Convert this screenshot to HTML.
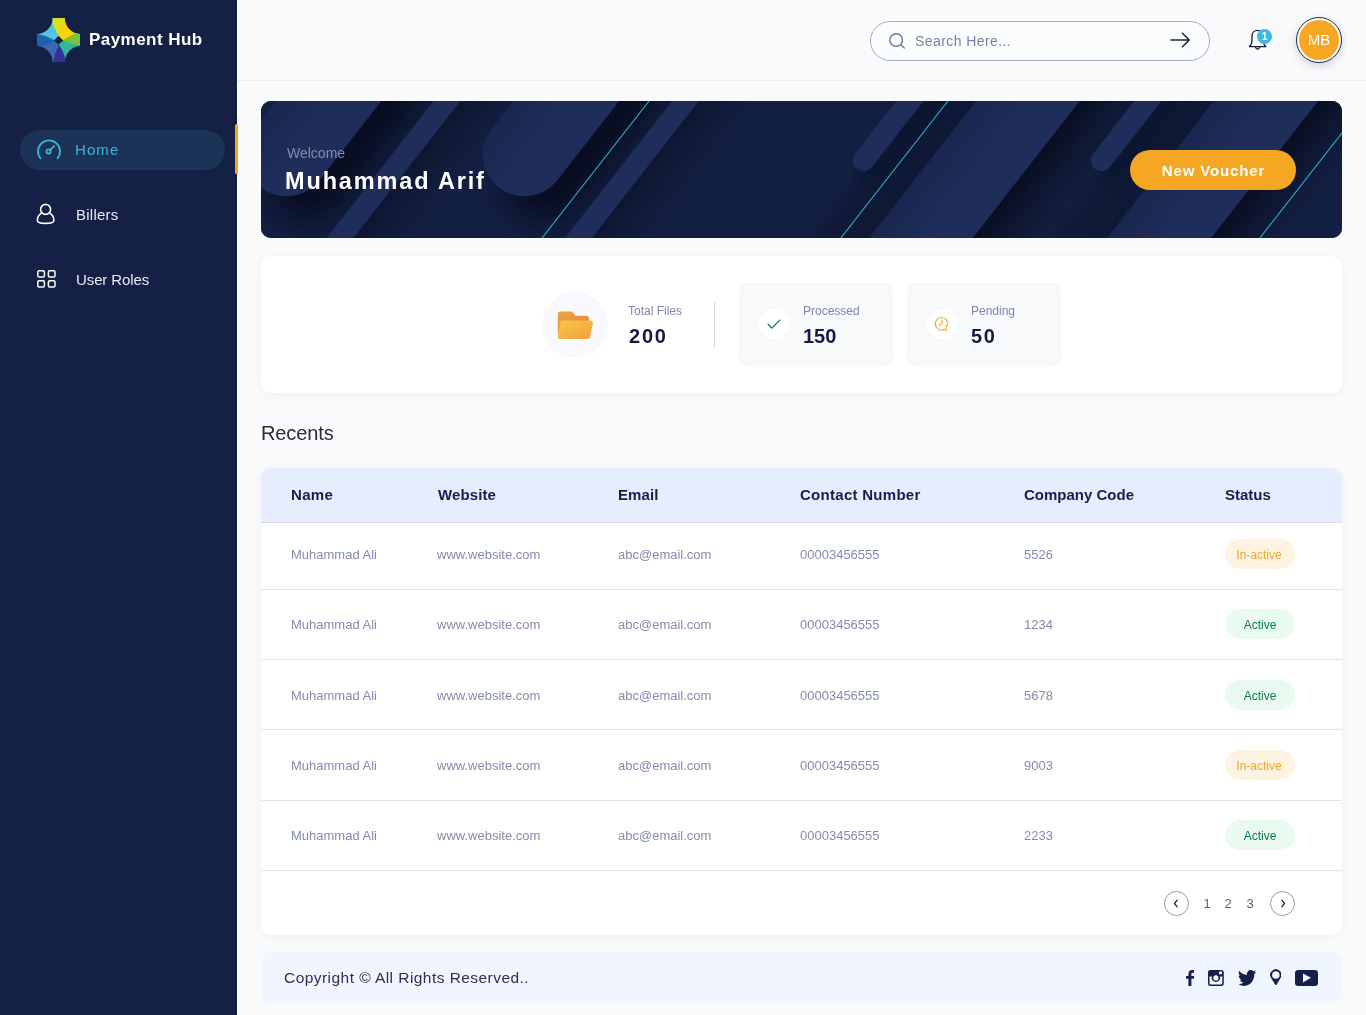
<!DOCTYPE html>
<html lang="en">
<head>
<meta charset="utf-8">
<title>Payment Hub</title>
<style>
*{box-sizing:border-box;margin:0;padding:0}
html,body{width:1366px;height:1015px;overflow:hidden}
body{font-family:"Liberation Sans",sans-serif;background:#f9fafb;position:relative;color:#14204a}
.abs{position:absolute}
.t{position:absolute;white-space:nowrap;line-height:1}
.t,.th,.td,.bdg{will-change:transform}
/* sidebar */
#side{position:absolute;left:0;top:0;width:237px;height:1015px;background:#142044}
#navact{position:absolute;left:20px;top:130px;width:205px;height:40px;border-radius:20px;background:#1a3356}
#navbar{position:absolute;left:235px;top:124px;width:3px;height:50px;border-radius:2px;background:#f5a623}
/* header */
#hdr{position:absolute;left:237px;top:0;width:1129px;height:81px;background:#f9fafb;border-bottom:1px solid #eaecf0}
#search{position:absolute;left:870px;top:21px;width:340px;height:40px;border-radius:20px;border:1px solid #a9aec8;background:#fbfcfe}
/* banner */
#banner{position:absolute;left:261px;top:101px;width:1081px;height:137px;border-radius:10px;overflow:hidden;background:#142043}
#btn{position:absolute;left:1130px;top:150px;width:166px;height:40px;border-radius:20px;background:#f5a623}
/* stats */
#stats{position:absolute;left:261px;top:256px;width:1081px;height:137px;border-radius:10px;background:#fff;box-shadow:0 2px 10px rgba(20,32,74,.045)}
.scard{position:absolute;top:282px;width:154px;height:85px;border-radius:10px;background:#f8f9fb}
.circ{position:absolute;border-radius:50%}
/* table */
#tbl{position:absolute;left:261px;top:468px;width:1081px;height:467px;border-radius:10px;background:#fff;box-shadow:0 2px 10px rgba(20,32,74,.045);overflow:hidden}
#thead{position:absolute;left:0;top:0;width:1081px;height:55px;background:#e6edff;border-bottom:1px solid #d9deea}
.sep{position:absolute;left:0;width:1081px;height:1px;background:#e3e5eb}
.th{position:absolute;white-space:nowrap;line-height:1;font-weight:700;font-size:15px;color:#14204a;top:19px}
.td{position:absolute;white-space:nowrap;line-height:1;font-size:13px;color:#858bae}
.bdg{position:absolute;left:964px;width:70px;height:30px;border-radius:15px;font-size:12px;line-height:32px;text-align:center}
.bdg.in{padding-right:2px}
.bdg.in{background:#fff3e2;color:#f5a623}
.bdg.ac{background:#e9fbf1;color:#0d7a4f}
/* footer */
#foot{position:absolute;left:261px;top:952px;width:1081px;height:51px;border-radius:10px;background:#f1f5ff}
</style>
</head>
<body>
<!-- SIDEBAR -->
<div id="side"></div>
<svg class="abs" style="left:36.9px;top:17.8px" width="43.4" height="44.1" viewBox="0 0 43.4 44.1">
<defs><clipPath id="lg"><path d="M15.7,0 H27.8 A15.5,16 0 0 0 43.4,16 V28.1 A15.5,16 0 0 0 27.8,44.1 H15.7 A15.7,16 0 0 0 0,28.1 V16 A15.7,16 0 0 0 15.7,0 Z"/></clipPath></defs>
<g clip-path="url(#lg)">
<rect width="44" height="45" fill="#3b68b5"/>
<path d="M0,16 L0,0 L15.7,0 L15.7,4.7 Q18,11.5 21.5,17.9 L17.1,22.4 Q9,18 0,16 Z" fill="#50c5e8" stroke="#50c5e8" stroke-width=".5"/>
<path d="M15.7,0 L27.8,0 Q25.5,9 21.5,17.9 Q18,11.5 15.7,4.7 Z" fill="#dde021" stroke="#dde021" stroke-width=".5"/>
<path d="M27.8,0 L44,0 L44,16 L39.5,15.5 Q32,18 26.2,22.4 L21.5,17.9 Q25.5,9 27.8,0 Z" fill="#ffd200" stroke="#ffd200" stroke-width=".5"/>
<path d="M39.5,15.5 L44,16 L44,28.1 Q35,27 26.2,22.4 Q32,18 39.5,15.5 Z" fill="#7dc243" stroke="#7dc243" stroke-width=".5"/>
<path d="M44,28.1 L44,45 L27.8,45 L27.8,39.5 Q26,33 21.5,26.5 L26.2,22.4 Q35,27 44,28.1 Z" fill="#31b994" stroke="#31b994" stroke-width=".5"/>
<path d="M27.8,39.5 L27.8,45 L15.7,45 Q17.5,35 21.5,26.5 Q26,33 27.8,39.5 Z" fill="#33309a" stroke="#33309a" stroke-width=".5"/>
<path d="M15.7,45 L0,45 L0,28.1 L4.1,28.1 Q11,26 17.1,22.4 L21.5,26.5 Q17.5,35 15.7,45 Z" fill="#3b68b5" stroke="#3b68b5" stroke-width=".5"/>
<path d="M4.1,28.1 L0,28.1 L0,16 Q9,18 17.1,22.4 Q11,26 4.1,28.1 Z" fill="#1d62b1" stroke="#1d62b1" stroke-width=".5"/>
<path d="M21.5,17.9 L26.2,22.4 L21.5,26.5 L17.1,22.4 Z" fill="#142044"/>
</g></svg>
<div class="t" id="brand" style="left:89px;top:31px;font-size:17px;font-weight:700;color:#fff;letter-spacing:.45px">Payment Hub</div>
<div id="navact"></div><div id="navbar"></div>
<svg class="abs" style="left:35px;top:136px" width="28" height="28" viewBox="0 0 28 28" fill="none" stroke="#3eb4dc" stroke-width="1.8" stroke-linecap="round">
<path d="M5.5,22.3 A11,11 0 1 1 22.5,22.3"/><circle cx="13.6" cy="15.4" r="2.1"/><path d="M15.2,13.9 L19.2,10.1"/></svg>
<div class="t" style="left:75px;top:142px;font-size:15px;color:#3eb4dc;letter-spacing:1.1px">Home</div>
<svg class="abs" style="left:34px;top:200px" width="24" height="28" viewBox="0 0 24 28" fill="none" stroke="#fff" stroke-width="1.6" stroke-linecap="round" stroke-linejoin="round">
<circle cx="11.6" cy="9.4" r="5"/><path d="M7.6,12.8 C4.5,14.8 3.3,18 3.3,20.6 C3.3,22.3 7,23.4 11.6,23.4 C16.2,23.4 19.9,22.3 19.9,20.6 C19.9,18 18.7,14.8 15.6,12.8"/></svg>
<div class="t" style="left:76px;top:207px;font-size:15px;color:#e9ebf3;letter-spacing:.25px">Billers</div>
<svg class="abs" style="left:36px;top:269px" width="22" height="20" viewBox="0 0 22 20" fill="none" stroke="#fff" stroke-width="1.5">
<rect x="1.8" y="1.8" width="6.6" height="6.2" rx="1.3"/><rect x="12.4" y="1.8" width="6.6" height="6.2" rx="1.3"/><rect x="1.8" y="11.8" width="6.6" height="6.2" rx="1.3"/><rect x="12.4" y="11.8" width="6.6" height="6.2" rx="1.3"/></svg>
<div class="t" style="left:76px;top:272px;font-size:15px;color:#e9ebf3;letter-spacing:-.1px">User Roles</div>

<!-- HEADER -->
<div id="hdr"></div>
<div id="search"></div>
<svg class="abs" style="left:886px;top:30px" width="22" height="22" viewBox="0 0 22 22" fill="none" stroke="#6f7699" stroke-width="1.4" stroke-linecap="round">
<circle cx="10.2" cy="10" r="6.3"/><path d="M14.8,14.7 L18.3,18"/></svg>
<div class="t" style="left:915px;top:34px;font-size:14px;color:#7c82a6;letter-spacing:.42px">Search Here...</div>
<svg class="abs" style="left:1168px;top:30px" width="24" height="20" viewBox="0 0 24 20" fill="none" stroke="#1d2547" stroke-width="1.6" stroke-linecap="round" stroke-linejoin="round">
<path d="M3,10 H21 M14.5,3.3 L21.2,10 L14.5,16.7"/></svg>
<!-- bell -->
<svg class="abs" style="left:1244px;top:26px" width="30" height="28" viewBox="0 0 30 28" fill="none" stroke="#151d3f" stroke-width="1.3" stroke-linecap="round" stroke-linejoin="round">
<path d="M5.4,20.6 Q8,18.4 8,14 V10.4 C8,6.7 10.5,4.3 13.6,4.3 C16.7,4.3 19.2,6.7 19.2,10.4 V14 Q19.2,18.4 21.8,20.6 Z"/>
<path d="M11.7,21.2 C11.9,23.6 15.3,23.6 15.5,21.2"/></svg>
<div class="circ" style="left:1257px;top:29px;width:15px;height:15px;background:#3fb8de"></div>
<div class="t" style="left:1257px;top:31.5px;width:15px;text-align:center;font-size:10px;font-weight:700;color:#fff">1</div>
<!-- avatar -->
<div class="circ" style="left:1296px;top:17px;width:46px;height:46px;border:1.3px solid #1a244c;background:#fff;box-shadow:0 3px 8px rgba(20,32,74,.18)"></div>
<div class="circ" style="left:1299px;top:20px;width:40px;height:40px;background:#f5a623"></div>
<div class="t" style="left:1299px;top:32.4px;width:40px;text-align:center;font-size:15px;color:#fff">MB</div>

<!-- BANNER -->
<div id="banner">
<svg width="1081" height="137" viewBox="0 0 1081 137" style="position:absolute;left:0;top:0;display:block">
<defs>
<linearGradient id="sh" gradientUnits="userSpaceOnUse" x1="0" y1="0" x2="60" y2="0">
<stop offset="0" stop-color="#060a1a" stop-opacity=".82"/><stop offset=".5" stop-color="#060a1a" stop-opacity=".38"/><stop offset="1" stop-color="#060a1a" stop-opacity="0"/>
</linearGradient>
<linearGradient id="shs" gradientUnits="userSpaceOnUse" x1="0" y1="0" x2="50" y2="0">
<stop offset="0" stop-color="#060a1a" stop-opacity=".45"/><stop offset="1" stop-color="#060a1a" stop-opacity="0"/>
</linearGradient>
<linearGradient id="shl" gradientUnits="userSpaceOnUse" x1="0" y1="0" x2="-55" y2="0">
<stop offset="0" stop-color="#060a1a" stop-opacity=".38"/><stop offset=".7" stop-color="#060a1a" stop-opacity=".25"/><stop offset="1" stop-color="#060a1a" stop-opacity="0"/>
</linearGradient>
<linearGradient id="st" gradientUnits="userSpaceOnUse" x1="0" y1="0" x2="82" y2="0">
<stop offset="0" stop-color="#19264f"/><stop offset=".6" stop-color="#1e2d5a"/><stop offset="1" stop-color="#1e2d5a"/>
</linearGradient>
<filter id="bl" x="-100%" y="-5%" width="300%" height="110%" color-interpolation-filters="sRGB"><feGaussianBlur stdDeviation="15"/></filter>
<filter id="bl2" x="-200%" y="-5%" width="500%" height="110%"><feGaussianBlur stdDeviation="7"/></filter>
</defs>
<rect width="1081" height="137" fill="#142043"/>
<!-- everything drawn in a rotated frame: x' = perpendicular (lower-right), y' = along stripe -->
<g id="bg" transform="matrix(0.788 0.6156 -0.6156 0.788 0 0)">

<!-- pill 1 + shadow -->
<rect x="44" y="-900" width="83.2" height="976" rx="41.6" fill="#050918" opacity=".8" filter="url(#bl)"/>
<g transform="translate(11.6 0)"><rect x="0" y="-900" width="83.2" height="968.2" rx="41.6" fill="url(#st)"/></g>
<!-- stripe 2 + shadow -->
<g transform="translate(157.1 0)"><rect x="0" y="-900" width="50" height="1800" fill="url(#shs)"/></g>
<rect x="136.1" y="-900" width="21" height="1800" fill="#1e2d5a"/>
<!-- pill 3 + shadow -->
<rect x="231.5" y="-900" width="83.2" height="829.7" rx="41.6" fill="#050918" opacity=".8" filter="url(#bl)"/>
<g transform="translate(199.1 0)"><rect x="0" y="-900" width="83.2" height="821.7" rx="41.6" fill="url(#st)"/></g>
<!-- cyan 1 -->
<rect x="305.3" y="-900" width="1.05" height="1800" fill="#2aaed2"/>
<!-- stripe 5 + shadow -->
<g transform="translate(345 0)"><rect x="0" y="-900" width="50" height="1800" fill="url(#shs)"/></g>
<rect x="324" y="-900" width="21" height="1800" fill="#1e2d5a"/>
<!-- pill 6 -->
<rect x="508" y="-900" width="34" height="592" rx="12" fill="#060a1a" opacity=".3" filter="url(#bl2)"/>
<!-- stripe 7 left shade, right shadow -->
<g transform="translate(563.6 0)"><rect x="-55" y="-900" width="55" height="1800" fill="url(#shl)"/></g>
<rect x="500.7" y="-900" width="21.4" height="586.5" rx="10.7" fill="#1e2d5a"/>
<rect x="540.8" y="-900" width="1.05" height="1800" fill="#2aaed2"/>
<g transform="translate(645.1 0)"><rect x="0" y="-900" width="60" height="1800" fill="url(#sh)"/></g>
<g transform="translate(563.6 0)"><rect x="0" y="-900" width="81.5" height="1800" fill="url(#st)"/></g>
<!-- pill 8 / stripe 9 -->
<g transform="translate(751.1 0)"><rect x="-55" y="-900" width="55" height="1800" fill="url(#shl)"/></g>
<rect x="695.6" y="-900" width="34" height="445.5" rx="12" fill="#060a1a" opacity=".3" filter="url(#bl2)"/>
<rect x="688.3" y="-900" width="21.4" height="440" rx="10.7" fill="#1e2d5a"/>
<g transform="translate(833.1 0)"><rect x="0" y="-900" width="60" height="1800" fill="url(#sh)"/></g>
<g transform="translate(751.1 0)"><rect x="0" y="-900" width="82" height="1800" fill="url(#st)"/></g>
<!-- cyan 3 -->
<rect x="871" y="-900" width="1.05" height="1800" fill="#2aaed2"/>

</g>
</svg>
</div>
<div class="t" style="left:287px;top:146px;font-size:14px;color:#858aa9">Welcome</div>
<div class="t" style="left:285px;top:170.3px;font-size:23.5px;font-weight:700;color:#fff;letter-spacing:1.85px">Muhammad Arif</div>
<div id="btn"></div>
<div class="t" style="left:1130px;top:163px;width:166px;text-align:center;font-size:15px;font-weight:700;color:#fff;letter-spacing:.85px;padding-left:1px">New Voucher</div>

<!-- STATS -->
<div id="stats"></div>
<div class="circ" style="left:542.2px;top:292.2px;width:65.5px;height:65.5px;background:#f8f9fc"></div>
<svg class="abs" style="left:556px;top:310px" width="40" height="32" viewBox="0 0 40 32">
<defs><linearGradient id="fb" x1="0" y1="0" x2="1" y2="1"><stop offset="0" stop-color="#f0a648"/><stop offset="1" stop-color="#e08f35"/></linearGradient>
<linearGradient id="ff" x1="0" y1="0" x2="1" y2="1"><stop offset="0" stop-color="#f9c646"/><stop offset="1" stop-color="#f0a03c"/></linearGradient></defs>
<path d="M1.8,4.2 Q1.8,1.6 4.4,1.6 H15.2 Q16.8,1.6 17.6,3 L19.2,5.8 H30.4 Q33,5.8 33,8.4 V12 H1.8 Z" fill="url(#fb)"/>
<path d="M1.8,10 H33 V24 H1.8 Z" fill="url(#fb)"/>
<path d="M6.2,10.8 H34.6 Q37.4,10.8 36.8,13.4 L34.2,26.4 Q33.7,29 31,29 H4.6 Q1.4,29 2,26.2 L4.4,12.8 Q4.8,10.8 6.2,10.8 Z" fill="url(#ff)"/></svg>
<div class="t" style="left:628px;top:305px;font-size:12px;color:#7f86aa">Total Files</div>
<div class="t" style="left:628.5px;top:326px;font-size:20px;font-weight:700;color:#141c40;letter-spacing:1.8px">200</div>
<div class="abs" style="left:714px;top:302px;width:1px;height:46px;background:#d6d9e4"></div>
<div class="scard" style="left:739px"></div>
<div class="circ" style="left:759px;top:309px;width:30px;height:30px;background:#fff"></div>
<svg class="abs" style="left:764px;top:314px" width="20" height="20" viewBox="0 0 20 20" fill="none" stroke="#0d7a4f" stroke-width="1.3" stroke-linecap="round" stroke-linejoin="round"><path d="M4.1,10.2 L7.7,14.1 L15.8,6.1"/></svg>
<div class="t" style="left:803px;top:305px;font-size:12px;color:#7f86aa">Processed</div>
<div class="t" style="left:802.5px;top:326px;font-size:20px;font-weight:700;color:#141c40;letter-spacing:0px">150</div>
<div class="scard" style="left:907px"></div>
<div class="circ" style="left:927px;top:309px;width:30px;height:30px;background:#fff"></div>
<svg class="abs" style="left:932px;top:314px" width="20" height="20" viewBox="0 0 20 20" fill="none" stroke="#f5a623" stroke-width="1.1" stroke-linecap="round" stroke-linejoin="round">
<path d="M13,15 A6.3,6.3 0 1 1 15.6,11.4"/><path d="M10.1,5.8 V9.6 L7.2,11.6"/><path d="M14.3,11.2 V15.2"/><circle cx="14.3" cy="16.6" r=".35"/></svg>
<div class="t" style="left:971px;top:305px;font-size:12px;color:#7f86aa">Pending</div>
<div class="t" style="left:970.5px;top:326px;font-size:20px;font-weight:700;color:#141c40;letter-spacing:1.6px">50</div>

<!-- RECENTS -->
<div class="t" style="left:261px;top:423px;font-size:20px;color:#2a2c3c;letter-spacing:-.1px">Recents</div>
<div id="tbl">
<div id="thead"></div>
<div class="th" style="left:30px;letter-spacing:.3px">Name</div>
<div class="th" style="left:177px;letter-spacing:.1px">Website</div>
<div class="th" style="left:357px;letter-spacing:.1px">Email</div>
<div class="th" style="left:539px;letter-spacing:.28px">Contact Number</div>
<div class="th" style="left:763px">Company Code</div>
<div class="th" style="left:964px">Status</div>
<div class="td" style="left:30px;top:80.2px">Muhammad Ali</div><div class="td" style="left:176px;top:80.2px">www.website.com</div><div class="td" style="left:357px;top:80.2px">abc@email.com</div><div class="td" style="left:539px;top:80.2px">00003456555</div><div class="td" style="left:763px;top:80.2px">5526</div>
<div class="bdg in" style="top:71.0px">In-active</div>
<div class="sep" style="top:121px"></div>
<div class="td" style="left:30px;top:150.4px">Muhammad Ali</div><div class="td" style="left:176px;top:150.4px">www.website.com</div><div class="td" style="left:357px;top:150.4px">abc@email.com</div><div class="td" style="left:539px;top:150.4px">00003456555</div><div class="td" style="left:763px;top:150.4px">1234</div>
<div class="bdg ac" style="top:141.2px">Active</div>
<div class="sep" style="top:191px"></div>
<div class="td" style="left:30px;top:220.7px">Muhammad Ali</div><div class="td" style="left:176px;top:220.7px">www.website.com</div><div class="td" style="left:357px;top:220.7px">abc@email.com</div><div class="td" style="left:539px;top:220.7px">00003456555</div><div class="td" style="left:763px;top:220.7px">5678</div>
<div class="bdg ac" style="top:211.5px">Active</div>
<div class="sep" style="top:261px"></div>
<div class="td" style="left:30px;top:290.9px">Muhammad Ali</div><div class="td" style="left:176px;top:290.9px">www.website.com</div><div class="td" style="left:357px;top:290.9px">abc@email.com</div><div class="td" style="left:539px;top:290.9px">00003456555</div><div class="td" style="left:763px;top:290.9px">9003</div>
<div class="bdg in" style="top:281.8px">In-active</div>
<div class="sep" style="top:332px"></div>
<div class="td" style="left:30px;top:361.2px">Muhammad Ali</div><div class="td" style="left:176px;top:361.2px">www.website.com</div><div class="td" style="left:357px;top:361.2px">abc@email.com</div><div class="td" style="left:539px;top:361.2px">00003456555</div><div class="td" style="left:763px;top:361.2px">2233</div>
<div class="bdg ac" style="top:352.0px">Active</div>
<div class="sep" style="top:402px"></div>
<div class="circ" style="left:903px;top:423px;width:25px;height:25px;border:1px solid #9c9c9c"></div>
<svg class="abs" style="left:903px;top:423px" width="25" height="25" viewBox="0 0 25 25" fill="none" stroke="#1d2a55" stroke-width="1.3" stroke-linecap="round" stroke-linejoin="round"><path d="M13.2,9.2 L10.5,12.5 L13.2,15.8"/></svg>
<div class="t" style="left:940px;top:429px;width:12px;text-align:center;font-size:13px;color:#666">1</div>
<div class="t" style="left:961px;top:429px;width:12px;text-align:center;font-size:13px;color:#666">2</div>
<div class="t" style="left:983px;top:429px;width:12px;text-align:center;font-size:13px;color:#666">3</div>
<div class="circ" style="left:1009px;top:423px;width:25px;height:25px;border:1px solid #9c9c9c"></div>
<svg class="abs" style="left:1009px;top:423px" width="25" height="25" viewBox="0 0 25 25" fill="none" stroke="#1d2a55" stroke-width="1.3" stroke-linecap="round" stroke-linejoin="round"><path d="M11.8,9.2 L14.5,12.5 L11.8,15.8"/></svg>
</div>

<!-- FOOTER -->
<div id="foot"></div>
<div class="t" style="left:284px;top:970px;font-size:15.5px;color:#2a3152;letter-spacing:.45px">Copyright © All Rights Reserved..</div>
<svg class="abs" style="left:1185.9px;top:969.7px" width="8.3" height="16.1" viewBox="95 0 864 1664" preserveAspectRatio="none" fill="#14204a"><path d="M959 12v264h-157q-86 0-116 36t-30 108v189h293l-39 296h-254v759h-306v-759h-255v-296h255v-218q0-186 104-288.500t277-102.500q147 0 228 12z"/></svg>
<svg class="abs" style="left:1208px;top:969.7px" width="15.8" height="16.1" viewBox="0 0 15.8 16.1">
<path fill="#14204a" fill-rule="evenodd" d="M2.6,0 H13.2 Q15.8,0 15.8,2.6 V13.5 Q15.8,16.1 13.2,16.1 H2.6 Q0,16.1 0,13.5 V2.6 Q0,0 2.6,0 Z M1.5,6.4 V13.3 Q1.5,14.6 2.8,14.6 H13 Q14.3,14.6 14.3,13.3 V6.4 H11.9 A4.25,4.25 0 1 1 3.9,6.4 Z M11,1.4 V4.2 H14 V1.4 Z M7.9,5.3 A2.6,2.6 0 1 0 7.9,10.5 A2.6,2.6 0 1 0 7.9,5.3 Z"/></svg>
<svg class="abs" style="left:1237.5px;top:969.7px" width="18.2" height="15.9" viewBox="108 256 1576 1280" preserveAspectRatio="none" fill="#14204a"><path d="M1684 408q-67 98-162 167 1 14 1 42 0 130-38 259.500t-115.500 248.500-184.500 210.500-258 146-323 54.500q-271 0-496-145 35 4 78 4 225 0 401-138-105-2-188-64.500t-114-159.500q33 5 61 5 43 0 85-11-112-23-185.500-111.500t-73.500-205.500v-4q68 38 146 41-66-44-105-115t-39-154q0-88 44-163 121 149 294.500 238.500t371.500 99.500q-8-38-8-74 0-134 94.500-228.500t228.500-94.500q140 0 236 102 109-21 205-78-37 115-142 178 93-10 186-50z"/></svg>
<svg class="abs" style="left:1269.8px;top:968.7px" width="11.7" height="16.8" viewBox="0 0 11.7 16.8" fill="#14204a"><path fill-rule="evenodd" d="M5.85,16.8 L1,8.85 A5.65,5.65 0 1 1 10.7,8.85 Z M5.85,2.2 A3.75,3.75 0 1 0 5.85,9.7 A3.75,3.75 0 1 0 5.85,2.2 Z"/></svg>
<svg class="abs" style="left:1295px;top:969.7px" width="23" height="16" viewBox="0 0 23 16"><rect width="23" height="16" rx="3.2" fill="#14204a"/><path d="M8,3.4 L16,7.8 L8,12.6 Z" fill="#f1f5ff"/></svg>
</body>
</html>
